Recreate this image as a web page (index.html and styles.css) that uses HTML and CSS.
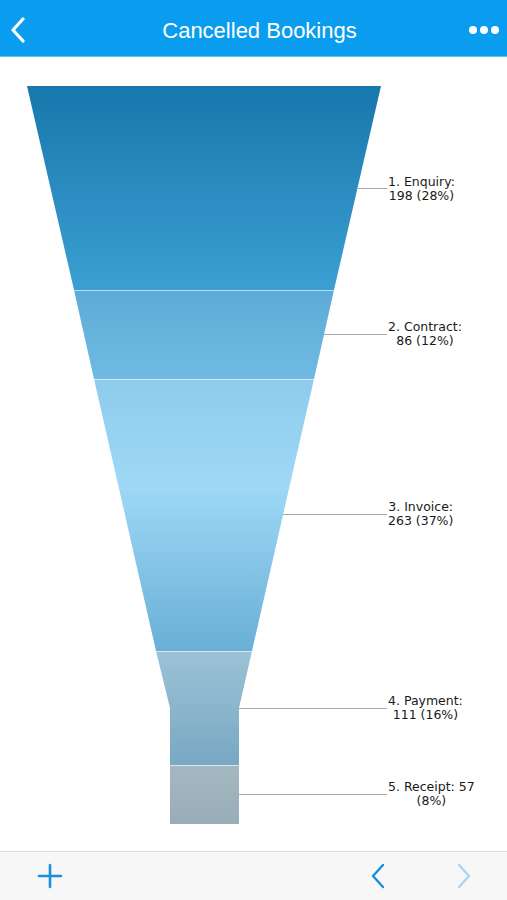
FILE: index.html
```html
<!DOCTYPE html>
<html>
<head>
    <title>Cancelled Bookings</title>
    <link rel="stylesheet" href="styles.css">
</head>
<body>
    <div class="app">
        <header class="nav-bar">
            <button class="nav-btn back-btn" aria-label="Back">
                <svg width="16" height="26" viewBox="0 0 16 26"><path d="M13 2 L3 13 L13 24" fill="none" stroke="#fff" stroke-width="3.2" stroke-linecap="round" stroke-linejoin="round"/></svg>
            </button>
            <h1 class="nav-title">Cancelled Bookings</h1>
            <button class="nav-btn more-btn" aria-label="More">
                <span class="dot"></span><span class="dot"></span><span class="dot"></span>
            </button>
        </header>

        <main class="chart">
            <svg class="funnel" width="507" height="794" viewBox="0 57 507 794">
                <defs>
                    <linearGradient id="g1" x1="0" y1="0" x2="0" y2="1">
                        <stop offset="0" stop-color="#1877ac"/>
                        <stop offset="1" stop-color="#3b9fd2"/>
                    </linearGradient>
                    <linearGradient id="g2" x1="0" y1="0" x2="0" y2="1">
                        <stop offset="0" stop-color="#5daad6"/>
                        <stop offset="1" stop-color="#6fbbe4"/>
                    </linearGradient>
                    <linearGradient id="g3" x1="0" y1="0" x2="0" y2="1">
                        <stop offset="0" stop-color="#8fcbec"/>
                        <stop offset="0.4" stop-color="#9dd8f6"/>
                        <stop offset="1" stop-color="#6aafd6"/>
                    </linearGradient>
                    <linearGradient id="g4" x1="0" y1="0" x2="0" y2="1">
                        <stop offset="0" stop-color="#9cc2d6"/>
                        <stop offset="1" stop-color="#78a8c3"/>
                    </linearGradient>
                    <linearGradient id="g5" x1="0" y1="0" x2="0" y2="1">
                        <stop offset="0" stop-color="#a5b8c1"/>
                        <stop offset="1" stop-color="#97adb8"/>
                    </linearGradient>
                </defs>

                <polygon points="27,86 381,86 334,290 74,290" fill="url(#g1)"/>
                <polygon points="74,290 334,290 314,379 94,379" fill="url(#g2)"/>
                <polygon points="94,379 314,379 252,651 156,651" fill="url(#g3)"/>
                <polygon points="156,651 252,651 239,708 239,765 170,765 170,708" fill="url(#g4)"/>
                <rect x="170" y="765" width="69" height="59" fill="url(#g5)"/>

                <g class="separators">
                    <line x1="74" y1="290.5" x2="334" y2="290.5"/>
                    <line x1="94" y1="379.5" x2="314" y2="379.5"/>
                    <line x1="156" y1="651.5" x2="252" y2="651.5"/>
                    <line x1="170" y1="765.5" x2="239" y2="765.5"/>
                </g>

                <g class="leaders">
                    <line x1="358" y1="188.5" x2="387" y2="188.5"/>
                    <line x1="324" y1="334.5" x2="387" y2="334.5"/>
                    <line x1="283" y1="514.5" x2="387" y2="514.5"/>
                    <line x1="239" y1="708.5" x2="387" y2="708.5"/>
                    <line x1="239" y1="794.5" x2="387" y2="794.5"/>
                </g>
            </svg>

            <div class="label" style="top: 118px;"><span>1. Enquiry:</span><span>198 (28%)</span></div>
            <div class="label" style="top: 263px;"><span>2. Contract:</span><span>86 (12%)</span></div>
            <div class="label" style="top: 443px;"><span>3. Invoice:</span><span>263 (37%)</span></div>
            <div class="label" style="top: 637px;"><span>4. Payment:</span><span>111 (16%)</span></div>
            <div class="label" style="top: 723px;"><span>5. Receipt: 57</span><span>(8%)</span></div>
        </main>

        <footer class="tool-bar">
            <button class="tool-btn add-btn" aria-label="Add">
                <svg width="26" height="26" viewBox="0 0 26 26"><path d="M13 2 V24 M2 13 H24" stroke="#1b8ede" stroke-width="2.6" stroke-linecap="round"/></svg>
            </button>
            <div class="pager">
                <button class="tool-btn" aria-label="Previous">
                    <svg width="16" height="26" viewBox="0 0 16 26"><path d="M13 2 L3 13 L13 24" fill="none" stroke="#1b8ede" stroke-width="2.4" stroke-linecap="round" stroke-linejoin="round"/></svg>
                </button>
                <button class="tool-btn" aria-label="Next" disabled>
                    <svg width="16" height="26" viewBox="0 0 16 26"><path d="M3 2 L13 13 L3 24" fill="none" stroke="#aad6f2" stroke-width="2.4" stroke-linecap="round" stroke-linejoin="round"/></svg>
                </button>
            </div>
        </footer>
    </div>
</body>
</html>
```

FILE: styles.css
```css
body {
    margin: 0;
    background: #fff;
    font-family: "Liberation Sans", Arial, sans-serif;
}

.app {
    width: 507px;
    height: 900px;
    display: flex;
    flex-direction: column;
    overflow: hidden;
}

button {
    background: none;
    border: none;
    padding: 0;
    cursor: pointer;
}

.nav-bar {
    height: 57px;
    box-sizing: border-box;
    background-color: #0a9def;
    border-bottom: 1px solid #5cc0f4;
    display: flex;
    align-items: center;
    justify-content: space-between;
    padding: 4px 8px 0 10px;
    flex-shrink: 0;
}

.nav-btn {
    display: flex;
    align-items: center;
    height: 40px;
}

.back-btn {
    width: 40px;
}

.nav-title {
    margin: 2px 0 0 10px;
    font-size: 22px;
    font-weight: normal;
    color: #fff;
}

.more-btn {
    gap: 3px;
    width: 40px;
    justify-content: flex-end;
}

.dot {
    width: 8px;
    height: 8px;
    border-radius: 50%;
    background: #fff;
}

.chart {
    flex: 1;
    position: relative;
}

.funnel {
    display: block;
}

.separators line {
    stroke: rgba(255, 255, 255, 0.6);
    stroke-width: 1;
}

.leaders line {
    stroke: #a8a8a8;
    stroke-width: 1;
}

.label {
    position: absolute;
    left: 388px;
    display: flex;
    flex-direction: column;
    align-items: center;
    font-family: "DejaVu Sans", sans-serif;
    font-size: 12.5px;
    line-height: 14px;
    color: #1a1a1a;
    white-space: nowrap;
}

.tool-bar {
    height: 48px;
    background: #f7f7f7;
    border-top: 1px solid #dcdcdc;
    display: flex;
    align-items: center;
    justify-content: space-between;
    padding: 0 35px 0 37px;
    flex-shrink: 0;
}

.tool-btn {
    display: flex;
    align-items: center;
}

.pager {
    display: flex;
    gap: 70px;
}
```
